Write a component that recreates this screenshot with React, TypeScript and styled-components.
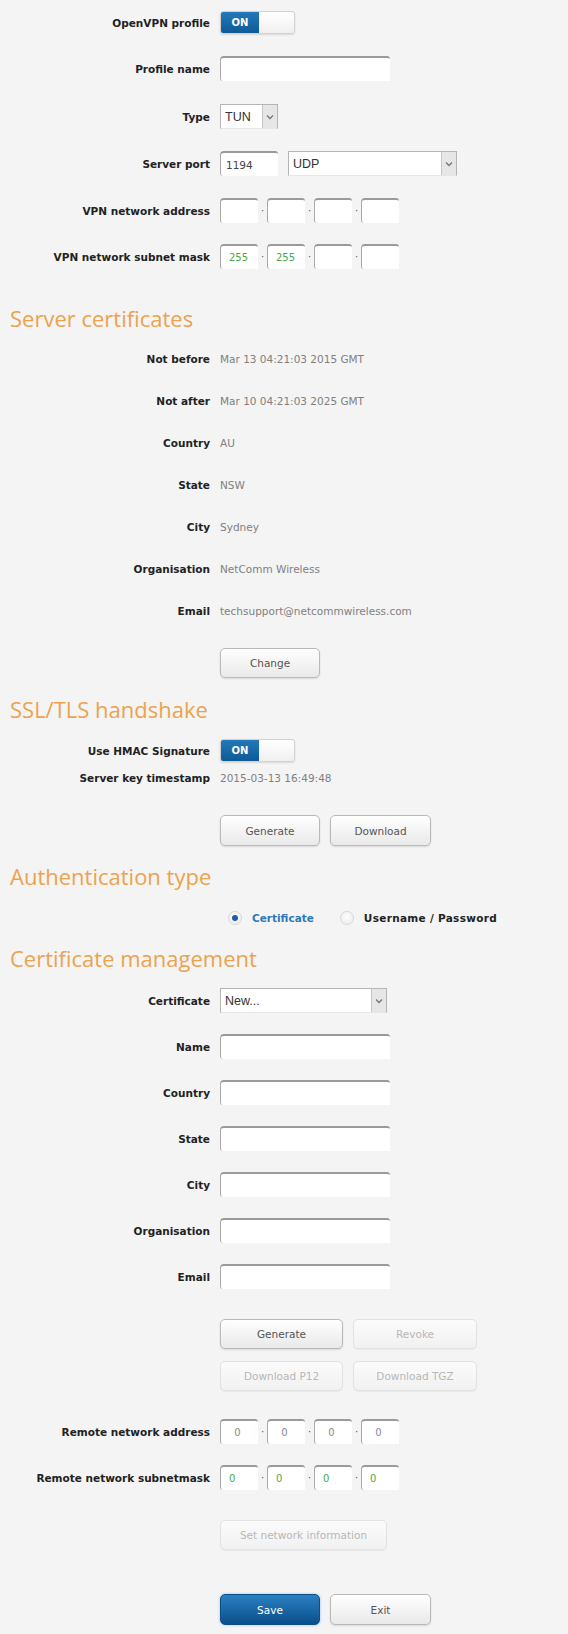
import React from "react";
import styled, { createGlobalStyle, css } from "styled-components";

const Global = createGlobalStyle`
  html, body { margin: 0; padding: 0; background: #f4f4f4; }
  body { font-family: "DejaVu Sans", Verdana, sans-serif; }
`;

const Page = styled.div`
  width: 568px;
  min-height: 1634px;
  background: #f4f4f4;
  display: flex;
  flex-direction: column;
  box-sizing: border-box;
`;

const Row = styled.div<{ $h?: number; $mt?: number }>`
  display: grid;
  grid-template-columns: 210px 1fr;
  column-gap: 10px;
  align-items: center;
  height: ${(p) => p.$h ?? 25}px;
  margin-top: ${(p) => p.$mt ?? 0}px;
`;

const Label = styled.div`
  text-align: right;
  font-size: 10.5px;
  font-weight: bold;
  color: #222;
  white-space: nowrap;
`;

const Value = styled.div`
  font-size: 10.5px;
  color: #808080;
  white-space: nowrap;
`;

const Heading = styled.h2<{ $mt?: number }>`
  margin: ${(p) => p.$mt ?? 0}px 0 0 10px;
  height: 40px;
  display: flex;
  align-items: center;
  font-family: "Open Sans", "DejaVu Sans", sans-serif;
  font-weight: normal;
  font-size: 22px;
  color: #eda24c;
`;

const Controls = styled.div<{ $gap?: number }>`
  display: flex;
  align-items: center;
  gap: ${(p) => p.$gap ?? 10}px;
`;

const ButtonRow = styled.div<{ $mt?: number }>`
  display: flex;
  gap: 10px;
  padding-left: 220px;
  margin-top: ${(p) => p.$mt ?? 0}px;
`;

const Toggle = styled.div`
  display: flex;
  width: 75px;
  height: 23px;
  border-radius: 3px;
  overflow: hidden;
  border: 1px solid #d2d2d2;
  box-sizing: border-box;
  box-shadow: 0 1px 2px rgba(0, 0, 0, 0.12);
  background: linear-gradient(#ffffff, #f0f0f0);
`;

const ToggleOn = styled.span`
  width: 38px;
  display: flex;
  align-items: center;
  justify-content: center;
  background: linear-gradient(#2479b8, #0d5a96);
  color: #fff;
  font-size: 10px;
  font-weight: bold;
`;

const TextInput = styled.div<{ $w?: number }>`
  width: ${(p) => p.$w ?? 170}px;
  height: 25px;
  box-sizing: border-box;
  background: #fff;
  border-radius: 4px 3px 0 3px;
  border-top: 2px solid #9a9a9a;
  border-left: 1px solid #a8a8a8;
  display: flex;
  align-items: center;
  padding-left: 5px;
  font-size: 10.5px;
  color: #444;
  font-family: "DejaVu Sans", sans-serif;
`;

const Select = styled.div<{ $w: number }>`
  width: ${(p) => p.$w}px;
  height: 25px;
  box-sizing: border-box;
  background: #fff;
  border: 1px solid #b5b5b5;
  border-bottom-color: #e6e6e6;
  display: flex;
  align-items: center;
  font-family: "Liberation Sans", Arial, sans-serif;
  font-size: 12.5px;
  color: #333;
`;

const SelectText = styled.span`
  flex: 1;
  padding-left: 4px;
`;

const SelectArrow = styled.span`
  width: 14px;
  align-self: stretch;
  background: #e6e6e6;
  border-left: 1px solid #c6c6c6;
  display: flex;
  align-items: center;
  justify-content: center;
  color: #777;
`;

const Octets = styled.div`
  display: flex;
  align-items: center;
`;

const Octet = styled.div<{ $tone?: "green" | "grey" }>`
  width: 38px;
  height: 25px;
  box-sizing: border-box;
  background: #fff;
  border-radius: 4px 3px 0 3px;
  border-top: 2px solid #9a9a9a;
  border-left: 1px solid #a8a8a8;
  display: flex;
  align-items: center;
  padding-left: 8px;
  font-size: 10px;
  color: ${(p) => (p.$tone === "green" ? "#4aa84a" : "#8a8a8a")};
  ${(p) => p.$tone === "grey" && css`justify-content: center; padding-left: 0; padding-right: 4px;`}
`;

const Dot = styled.span`
  width: 9px;
  text-align: center;
  font-size: 10px;
  color: #555;
  line-height: 1;
`;

const Button = styled.button<{ $w: number; $h?: number; $variant?: "primary" | "disabled" }>`
  width: ${(p) => p.$w}px;
  height: ${(p) => p.$h ?? 30}px;
  border-radius: 5px;
  border: 1px solid #b9b9b9;
  background: linear-gradient(#ffffff, #e9e9e9);
  box-shadow: 0 1px 2px rgba(0, 0, 0, 0.12);
  font-family: "DejaVu Sans", sans-serif;
  font-size: 10.5px;
  color: #555;
  cursor: pointer;
  ${(p) =>
    p.$variant === "disabled" &&
    css`
      border-color: #e2e2e2;
      color: #b8b8b8;
      background: linear-gradient(#fbfbfb, #f1f1f1);
      box-shadow: 0 1px 1px rgba(0, 0, 0, 0.05);
    `}
  ${(p) =>
    p.$variant === "primary" &&
    css`
      border-color: #0b4f88;
      color: #fff;
      background: linear-gradient(#2a80c2, #0b4f8a);
      box-shadow: 0 0 3px rgba(40, 140, 220, 0.45);
    `}
`;

const RadioGroup = styled.div<{ $mt?: number }>`
  display: flex;
  align-items: center;
  padding-left: 228px;
  height: 20px;
  margin-top: ${(p) => p.$mt ?? 0}px;
  gap: 10px;
`;

const RadioCircle = styled.span<{ $on?: boolean }>`
  width: 14px;
  height: 14px;
  border-radius: 50%;
  box-sizing: border-box;
  border: 1px solid #d8d8d8;
  background: radial-gradient(circle at 50% 40%, #ffffff, #e8e8e8);
  display: inline-flex;
  align-items: center;
  justify-content: center;
  &::after {
    content: "";
    width: 6px;
    height: 6px;
    border-radius: 50%;
    background: ${(p) => (p.$on ? "#1d5fa8" : "transparent")};
  }
`;

const RadioText = styled.span<{ $on?: boolean }>`
  font-size: 10.5px;
  font-weight: bold;
  color: ${(p) => (p.$on ? "#2c7ab8" : "#222")};
  margin-right: 16px;
  letter-spacing: ${(p) => (p.$on ? 0 : 0.3)}px;
`;

const Chevron = () => (
  <svg width="8" height="6" viewBox="0 0 8 6">
    <path d="M1 1.5 L4 4.5 L7 1.5" fill="none" stroke="#777" strokeWidth="1.3" />
  </svg>
);

const DropDown = ({ w, text }: { w: number; text: string }) => (
  <Select $w={w}>
    <SelectText>{text}</SelectText>
    <SelectArrow>
      <Chevron />
    </SelectArrow>
  </Select>
);

type Tone = "green" | "grey" | undefined;

const IpField = ({ values, tones }: { values: string[]; tones?: Tone[] }) => (
  <Octets>
    {values.map((v, i) => (
      <React.Fragment key={i}>
        {i > 0 && <Dot>·</Dot>}
        <Octet $tone={tones ? tones[i] : undefined}>{v}</Octet>
      </React.Fragment>
    ))}
  </Octets>
);

const certInfo: [string, string][] = [
  ["Not before", "Mar 13 04:21:03 2015 GMT"],
  ["Not after", "Mar 10 04:21:03 2025 GMT"],
  ["Country", "AU"],
  ["State", "NSW"],
  ["City", "Sydney"],
  ["Organisation", "NetComm Wireless"],
  ["Email", "techsupport@netcommwireless.com"],
];

const certFields = ["Name", "Country", "State", "City", "Organisation", "Email"];

export default function App() {
  return (
    <Page>
      <Global />
      <Row $h={23} $mt={11}>
        <Label>OpenVPN profile</Label>
        <Toggle>
          <ToggleOn>ON</ToggleOn>
        </Toggle>
      </Row>
      <Row $mt={22}>
        <Label>Profile name</Label>
        <TextInput />
      </Row>
      <Row $mt={23}>
        <Label>Type</Label>
        <DropDown w={58} text="TUN" />
      </Row>
      <Row $mt={22}>
        <Label>Server port</Label>
        <Controls>
          <TextInput $w={58}>1194</TextInput>
          <DropDown w={169} text="UDP" />
        </Controls>
      </Row>
      <Row $mt={22}>
        <Label>VPN network address</Label>
        <IpField values={["", "", "", ""]} />
      </Row>
      <Row $mt={21}>
        <Label>VPN network subnet mask</Label>
        <IpField values={["255", "255", "", ""]} tones={["green", "green", undefined, undefined]} />
      </Row>

      <Heading $mt={29}>Server certificates</Heading>
      {certInfo.map(([k, v]) => (
        <Row key={k} $h={42}>
          <Label>{k}</Label>
          <Value>{v}</Value>
        </Row>
      ))}
      <ButtonRow $mt={16}>
        <Button $w={100}>Change</Button>
      </ButtonRow>

      <Heading $mt={11}>SSL/TLS handshake</Heading>
      <Row $h={23} $mt={10}>
        <Label>Use HMAC Signature</Label>
        <Toggle>
          <ToggleOn>ON</ToggleOn>
        </Toggle>
      </Row>
      <Row $h={18} $mt={7}>
        <Label>Server key timestamp</Label>
        <Value>2015-03-13 16:49:48</Value>
      </Row>
      <ButtonRow $mt={28}>
        <Button $w={100} $h={31}>Generate</Button>
        <Button $w={101} $h={31}>Download</Button>
      </ButtonRow>

      <Heading $mt={10}>Authentication type</Heading>
      <RadioGroup $mt={12}>
        <RadioCircle $on />
        <RadioText $on>Certificate</RadioText>
        <RadioCircle />
        <RadioText>Username / Password</RadioText>
      </RadioGroup>

      <Heading $mt={10}>Certificate management</Heading>
      <Row $mt={10}>
        <Label>Certificate</Label>
        <DropDown w={167} text="New..." />
      </Row>
      {certFields.map((f) => (
        <Row key={f} $mt={21}>
          <Label>{f}</Label>
          <TextInput />
        </Row>
      ))}
      <ButtonRow $mt={30}>
        <Button $w={123}>Generate</Button>
        <Button $w={124} $variant="disabled">Revoke</Button>
      </ButtonRow>
      <ButtonRow $mt={12}>
        <Button $w={123} $variant="disabled">Download P12</Button>
        <Button $w={124} $variant="disabled">Download TGZ</Button>
      </ButtonRow>

      <Row $mt={28}>
        <Label>Remote network address</Label>
        <IpField values={["0", "0", "0", "0"]} tones={["grey", "grey", "grey", "grey"]} />
      </Row>
      <Row $mt={21}>
        <Label>Remote network subnetmask</Label>
        <IpField values={["0", "0", "0", "0"]} tones={["green", "green", "green", "green"]} />
      </Row>
      <ButtonRow $mt={30}>
        <Button $w={167} $variant="disabled">Set network information</Button>
      </ButtonRow>
      <ButtonRow $mt={44}>
        <Button $w={100} $h={31} $variant="primary">Save</Button>
        <Button $w={101} $h={31}>Exit</Button>
      </ButtonRow>
    </Page>
  );
}
